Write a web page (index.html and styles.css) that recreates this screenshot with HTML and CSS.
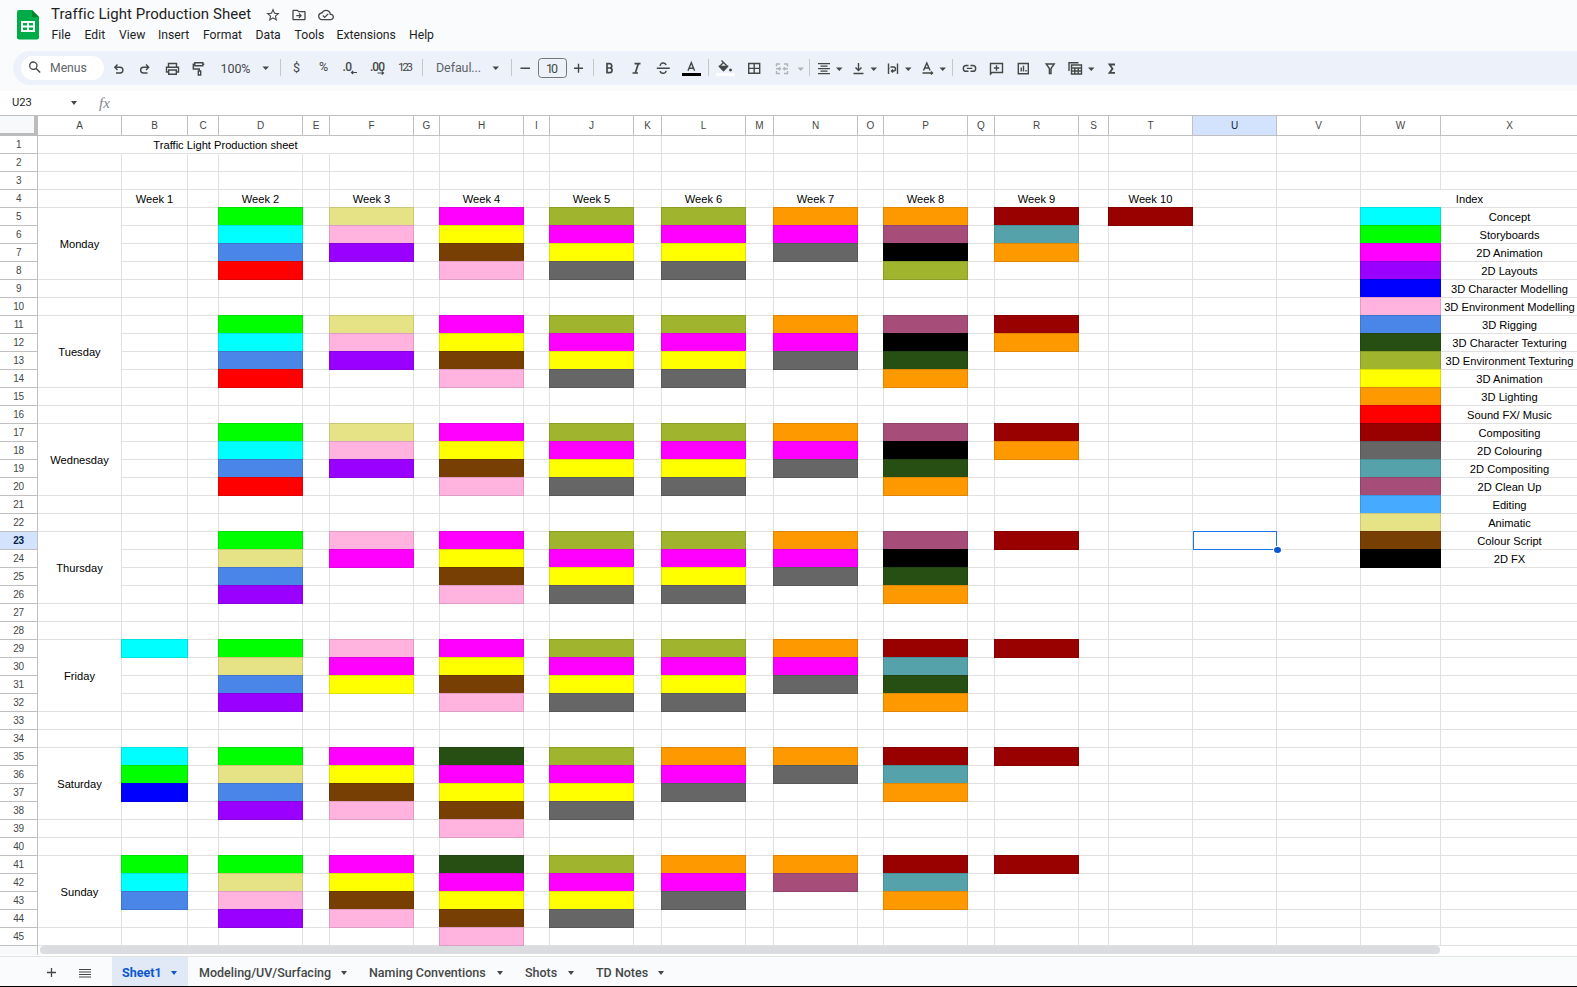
FILE: index.html
```html
<!DOCTYPE html>
<html lang="en">
<head>
<meta charset="utf-8">
<title>Traffic Light Production Sheet</title>
<link rel="stylesheet" href="styles.css">
</head>
<body>
<header class="top">
  <svg class="logo" width="22" height="30" viewBox="0 0 22 30"><path fill="#00ac47" d="M2 0h13l7 7v20.500a2 2 0 0 1-2 2H2a2 2 0 0 1-2-2V2a2 2 0 0 1 2-2z"/><path fill="#00832d" d="M15 0l7 7h-7z"/><path fill="#fff" fill-rule="evenodd" d="M4 11h14v11H4zM6 13v2.500h4V13zM12 13v2.500h4V13zM6 17.500V20h4v-2.500zM12 17.500V20h4v-2.500z"/></svg>
  <div class="heading">
    <div class="title-row">
      <span class="title">Traffic Light Production Sheet</span>
      <svg class="ic star" width="16" height="16" viewBox="0 0 24 24"><path d="M22 9.240l-7.190-.62L12 2 9.190 8.630 2 9.240l5.460 4.730L5.820 21 12 17.270 18.180 21l-1.630-7.030L22 9.240zM12 15.400l-3.760 2.270 1-4.280-3.320-2.880 4.380-.38L12 6.100l1.710 4.040 4.380.38-3.320 2.880 1 4.280L12 15.400z"/></svg>
      <svg class="ic folder" width="16" height="16" viewBox="0 0 24 24"><path d="M20 6h-8l-2-2H4c-1.100 0-2 .9-2 2v12c0 1.100.9 2 2 2h16c1.100 0 2-.9 2-2V8c0-1.100-.9-2-2-2zm0 12H4V6h5.200l2 2H20v10zm-7.500-1l4-4-4-4-1.300 1.300 1.700 1.700H8v2h4.900l-1.700 1.700z"/></svg>
      <svg class="ic cloud" width="16" height="16" viewBox="0 0 24 24"><path d="M19.350 10.040A7.490 7.490 0 0 0 12 4C9.110 4 6.600 5.640 5.350 8.040A5.994 5.994 0 0 0 0 14c0 3.310 2.690 6 6 6h13c2.760 0 5-2.240 5-5 0-2.640-2.050-4.780-4.650-4.960zM19 18H6c-2.210 0-4-1.790-4-4 0-2.050 1.530-3.760 3.560-3.970l1.070-.11.5-.95A5.469 5.469 0 0 1 12 6c2.620 0 4.880 1.860 5.390 4.430l.3 1.500 1.530.11A2.980 2.980 0 0 1 22 15c0 1.650-1.350 3-3 3zm-9-3.820l-2.090-2.090L6.500 13.500 10 17l6.010-6.010-1.410-1.410z"/></svg>
    </div>
    <nav class="menus">
      <span class="m1">File</span><span class="m2">Edit</span><span class="m3">View</span><span class="m4">Insert</span><span class="m5">Format</span><span class="m6">Data</span><span class="m7">Tools</span><span class="m8">Extensions</span><span class="m9">Help</span>
    </nav>
  </div>
</header>
<div class="toolbar">
  <div class="search">
    <svg class="ic" width="16" height="16" viewBox="0 0 24 24"><path d="M20.500 19l-5.700-5.700a6.500 6.500 0 1 0-1.500 1.500l5.700 5.700zM9.500 14a4.500 4.500 0 1 1 0-9 4.500 4.500 0 0 1 0 9z" transform="translate(0 -1)"/></svg>
    <span>Menus</span>
  </div>
  <svg class="tools" width="1020" height="34" viewBox="106 51 1020 34">
    <g class="fill">
      <g class="tx"><text x="220.500" y="73" textLength="30">100%</text><text x="293" y="71.500">$</text><text x="319" y="71" textLength="9.500">%</text><text x="342.500" y="70.500" class="b" textLength="9.500">.0</text><text x="370" y="70.500" class="b" textLength="15">.00</text><text x="398" y="71" class="sm" textLength="15">123</text><text x="436" y="71.500" textLength="45" class="lt">Defaul...</text><text x="546" y="72.500" textLength="12">10</text></g>
      <path d="M262.500 66.500h6.500l-3.250 3.500zM492.500 66.500h6.500l-3.250 3.500zM836 67.500h6.500l-3.250 3.500zM870.500 67.500h6.500l-3.250 3.500zM905 67.500h6.500l-3.250 3.500zM939.500 67.500h6.500l-3.250 3.500zM1088 67.500h6.500l-3.250 3.500z"/>
      <path class="off" d="M797.500 67.500h6.500l-3.250 3.500z"/>
    </g>
    <path class="sep" d="M280.500 59v17M422.500 59v17M511.500 59v17M593.500 59v17M708.500 59v17M809.500 59v17M952.500 59v17"/>
    <g class="line">
      <path d="M117.500 64.500l-2.700 2.700 2.700 2.700M115 67.200h5a2.800 2.800 0 0 1 0 5.800h-4"/>
      <path d="M146 64.500l2.700 2.700-2.700 2.700M148.500 67.200h-5a2.800 2.800 0 0 0 0 5.800h4"/>
      <path d="M168.500 67v-3.500h8V67M168.500 72h-2v-4.800h12V72h-2M168.700 70h7.600v4.300h-7.600z"/>
      <path d="M194.800 62.800h8v3h-8zM202.800 64.200h1.500M194.800 64.200h-1.500V69h6v2M198.300 71h2.400v4h-2.400z"/>
      <path class="arrow" d="M357 72.500h-5.500m1.700-1.700l-1.700 1.700 1.700 1.700M377.500 73h6m-1.700-1.700l1.700 1.700-1.700 1.700"/>
      <path d="M520.500 68.200h9.500M574 68.200h9M578.500 63.700v9"/>
      <rect x="538.500" y="58.500" width="28" height="19" rx="3" class="box"/>
      <path d="M607 63.700v9h2.500a2.300 2.300 0 0 0 .4-4.700 2.100 2.100 0 0 0-.6-4.300zM607 68h2.700" stroke-width="1.700"/>
      <path d="M634.500 63.700h6M632.500 73h5.500M638.300 63.700l-3 9.300" stroke-width="1.700"/>
      <path d="M656.800 68.300h13M660.300 66a2.800 2.400 0 0 1 5.800-1M660.200 71a2.900 2.400 0 0 0 5.800-.3"/>
      <path d="M688 70.700l3.300-8 3.300 8M689.200 68.200h4.200"/>
      <path d="M721.500 60.500l2.500 2.500 3.500 3.500-4 4-4-4 4-4"/>
      <path d="M719.800 66.500h7.400l-3.700 4z" fill="#444746"/>
      <circle cx="730.500" cy="70" r=".8"/>
      <path d="M748.700 63.500h11v9.800h-11zM754.200 63.500v9.800M748.700 68.400h11"/>
      <path class="offl" d="M780 64h-3.500v2.500M784 64h3.500v2.500M780 73.500h-3.500V71M784 73.500h3.500V71M776 68.700h4.500M788 68.700h-4.500M779 67.200l1.500 1.500-1.500 1.500M785 67.200l-1.500 1.500 1.500 1.500"/>
      <path d="M818 63.600h12M820.500 66.100h7M818 68.600h12M820.500 71.100h7M818 73.600h12"/>
      <path d="M853.500 73.500h10M858.500 63v7M855.500 67.500l3 3 3-3"/>
      <path d="M888.500 63.500v10.500M897.500 63.500v10.500M888.500 68.500h1M890.500 67h3a1.900 1.900 0 0 1 0 4h-2.500M893 69.500l-1.500 1.500 1.500 1.500"/>
      <path d="M923.500 70.500l3.300-7.500 3.300 7.500M924.800 68h4M922.500 73h10M931 71.500l1.500 1.500-1.500 1.500"/>
      <path d="M968.500 65.500h-2.300a2.900 2.900 0 0 0 0 5.800h2.300M970.500 65.500h2.300a2.900 2.900 0 0 1 0 5.800h-2.300M966.800 68.400h5.500"/>
      <path d="M990.500 74V63.500h12v9h-10.500zM996.500 65.300v5.400M993.800 68h5.400"/>
      <path d="M1018.300 63.500h10v10.300h-10zM1021.200 67.500v4M1023.500 65.800v5.700M1026 70v1.500"/>
      <path d="M1046.200 64h8l-3.200 4.500v5h-1.600v-5z"/>
      <path d="M1069 71V62.700h9.500M1071.500 65h10v9h-10zM1071.500 68h10M1074.800 68v6M1078.200 68v6M1071.500 71h10"/>
      <path d="M1115 64.500h-5.500l3 4.200-3 4.200h5.500" stroke-width="1.800"/>
    </g>
    <path d="M682 73h19v3h-19z"/><path fill="#fff" d="M716 73h19v3h-19z"/>
  </svg>
</div>
<div class="formula"><span class="ref">U23</span><i class="caret"></i><span class="fx">fx</span></div>
<main class="sheet" id="sheet"></main>
<div class="scroll"><div class="stub"></div><div class="thumb"></div></div>
<footer class="tabs">
  <svg class="add" width="12" height="12" viewBox="0 0 12 12"><path d="M5.500 1v9M1 5.500h9"/></svg>
  <svg class="all" width="12" height="12" viewBox="0 0 12 12"><path d="M0 2.500h12M0 5h12M0 7.500h12M0 10h12"/></svg>
  <div class="tab active"><span class="t1">Sheet1</span><i class="caret"></i></div>
  <div class="tab w2"><span>Modeling/UV/Surfacing</span><i class="caret"></i></div>
  <div class="tab w3"><span>Naming Conventions</span><i class="caret"></i></div>
  <div class="tab w4"><span>Shots</span><i class="caret"></i></div>
  <div class="tab w5"><span>TD Notes</span><i class="caret"></i></div>
</footer>
<script src="sheet.js"></script>
</body>
</html>
```
FILE: styles.css
```css
* { box-sizing: border-box; }
body { margin: 0; width: 1577px; height: 987px; overflow: hidden; background: #f9fbfd; font-family: "Liberation Sans", Arial, sans-serif; display: flex; flex-direction: column; border-bottom: 1px solid #000; }
.ic { fill: #444746; flex: none; }

.top { height: 51px; flex: none; display: flex; padding-left: 17px; }
.logo { margin-top: 10px; flex: none; }
.heading { padding: 4px 0 0 12px; }
.title-row { display: flex; align-items: center; height: 21px; }
.title { font: 15px/21px Roboto, sans-serif; letter-spacing: 0.05px; width: 214px; color: #1f1f1f; white-space: nowrap; }
.folder { margin-left: 10px; }
.cloud { margin-left: 11px; }
.menus { display: flex; padding-left: 0.5px; font: 12.200px/20px Roboto, sans-serif; color: #1f1f1f; white-space: nowrap; }
.m1 { width: 33px; } .m2 { width: 34.5px; } .m3 { width: 39px; } .m4 { width: 45px; } .m5 { width: 52.5px; }
.m6 { width: 39px; } .m7 { width: 42px; } .m8 { width: 72.500px; }

.toolbar { height: 34px; flex: none; margin-left: 13px; background: #edf2fa; border-radius: 17px 0 0 17px; display: flex; align-items: center; padding-left: 8px; }
.search { width: 83px; height: 24px; border-radius: 12px; background: #fff; display: flex; align-items: center; padding-left: 6px; gap: 7px; font: 12.200px/24px Roboto, sans-serif; color: #5f6368; }
.tools { margin-left: 2px; flex: none; }
.tools .fill { fill: #444746; }
.tools .off { fill: #b0b3b8; }
.tx { font: 12.500px Roboto, sans-serif; }
.tx .sm { font-size: 11.500px; }
.tx .b { font-size: 12px; font-weight: 500; }
.tx .lt { fill: #5f6368; }
.sep { stroke: #c7c7c7; }
.line { fill: none; stroke: #444746; stroke-width: 1.4; }
.line .arrow { stroke-width: 1.2; }
.line .box { stroke: #747775; stroke-width: 1; }
.line .offl { stroke: #b0b3b8; }

.caret { width: 0; height: 0; border: 3.500px solid transparent; border-top: 4px solid #444746; border-bottom: 0; flex: none; }
.formula { margin-top: 6px; height: 24px; flex: none; background: #fff; display: flex; align-items: center; padding-left: 12px; font: 11.200px Roboto, sans-serif; color: #1f1f1f; }
.ref { width: 59px; padding-bottom: 1px; }
.fx { margin-left: 22px; padding-top: 1px; font: italic 15px "Liberation Serif", serif; color: #80868b; }

.sheet { flex: none; height: 831px; overflow: hidden; background: #fff; border-top: 1px solid #c0c0c0; display: grid; grid-auto-rows: 18px; grid-template-rows: 20px;
  grid-template-columns: 38px 84px 66px 31px 84px 27px 84px 26px 84px 26px 84px 28px 84px 28px 84px 26px 84px 27px 84px 30px 84px 84px 84px 80px 138px; }
.corner { background: #f8f9fa; border-right: 4px solid #bcbcbc; border-bottom: 3px solid #bcbcbc; }
.head { border-right: 1px solid #c0c0c0; border-bottom: 1px solid #c0c0c0; display: flex; align-items: center; justify-content: center; font-size: 10px; color: #444746; }
.head.on { background: #d3e3fd; color: #041e49; }
.row { font-size: 10px; letter-spacing: -0.4px; }
.row.on { font-weight: 700; }
.cell { border-right: 1px solid #e1e1e1; border-bottom: 1px solid #e1e1e1; display: flex; align-items: center; justify-content: center; font-size: 11.150px; color: #000; white-space: nowrap; padding-top: 1px; }
.color { margin: -1px 0 0 -1px; border: 1px solid rgba(0, 0, 0, .12); background-clip: border-box; }
.selected { position: relative; margin-left: 0; border: 1px solid #1a73e8; margin-top: -1px; }
.selected::after { content: ""; position: absolute; right: -5px; bottom: -4px; width: 7px; height: 6px; border-radius: 50%; background: #0b57d0; border: 0; box-shadow: 0 0 0 1px #fff; }

.lime { background-color: #0f0; } .cyan { background-color: #0ff; } .blue { background-color: #4a86e8; } .red { background-color: #f00; }
.khaki { background-color: #e6e387; } .pink { background-color: #ffb3de; } .violet { background-color: #90f; } .magenta { background-color: #f0f; }
.yellow { background-color: #ff0; } .brown { background-color: #783f04; } .olive { background-color: #a0b42d; } .grey { background-color: #666; }
.orange { background-color: #f90; } .black { background-color: #000; } .plum { background-color: #a64d79; } .teal { background-color: #55a2aa; }
.maroon { background-color: #900; } .forest { background-color: #274e13; } .navy { background-color: #00f; } .sky { background-color: #46aaff; }

.scroll { height: 11px; flex: none; background: #fff; display: flex; border-bottom: 1px solid #e1e3e1; }
.stub { width: 38px; height: 9px; background: #f8f9fa; border-right: 1px solid #c0c0c0; }
.thumb { margin-left: 2px; width: 1400px; height: 8px; border-radius: 4px; background: #dadce0; }

.tabs { height: 29px; flex: none; display: flex; align-items: stretch; padding-left: 46px; background: #f9fbfd; font: 500 12.500px Roboto, sans-serif; color: #444746; }
.tabs svg { stroke: #444746; stroke-width: 1.3; margin-top: 10px; flex: none; }
.tabs .all { stroke-width: 1.2; }
.all { margin-left: 21px; margin-right: 21px; }
.tab { display: flex; align-items: center; justify-content: space-between; padding: 2px 11px 0 11px; white-space: nowrap; }
.active { width: 76px; background: #e1e9f7; color: #0b57d0; font-weight: 700; padding-left: 10px; }
.active .caret { border-top-color: #0b57d0; }
.w2 { width: 170px; } .w3 { width: 156px; } .w4 { width: 71px; } .w5 { width: 90px; }
```
FILE: sheet.js
```js
const columns = 'ABCDEFGHIJKLMNOPQRSTUVWX';
const palette = { g: 'lime', c: 'cyan', b: 'blue', r: 'red', k: 'khaki', p: 'pink', v: 'violet', m: 'magenta', y: 'yellow', n: 'brown', o: 'olive', e: 'grey', a: 'orange', x: 'black', u: 'plum', t: 'teal', d: 'maroon', f: 'forest', z: 'navy', s: 'sky' };
const days = [
  ['Monday', 5, { D: 'gcbr', F: 'kpv', H: 'mynp', J: 'omye', L: 'omye', N: 'ame', P: 'auxo', R: 'dta', T: 'd' }],
  ['Tuesday', 11, { D: 'gcbr', F: 'kpv', H: 'mynp', J: 'omye', L: 'omye', N: 'ame', P: 'uxfa', R: 'da' }],
  ['Wednesday', 17, { D: 'gcbr', F: 'kpv', H: 'mynp', J: 'omye', L: 'omye', N: 'ame', P: 'uxfa', R: 'da' }],
  ['Thursday', 23, { D: 'gkbv', F: 'pm', H: 'mynp', J: 'omye', L: 'omye', N: 'ame', P: 'uxfa', R: 'd' }],
  ['Friday', 29, { B: 'c', D: 'gkbv', F: 'pmy', H: 'mynp', J: 'omye', L: 'omye', N: 'ame', P: 'dtfa', R: 'd' }],
  ['Saturday', 35, { B: 'cgz', D: 'gkbv', F: 'mynp', H: 'fmynp', J: 'omye', L: 'ame', N: 'ae', P: 'dta', R: 'd' }],
  ['Sunday', 41, { B: 'gcb', D: 'gkpv', F: 'mynp', H: 'fmynp', J: 'omye', L: 'ame', N: 'au', P: 'dta', R: 'd' }]
];
const legend = ['Concept', 'Storyboards', '2D Animation', '2D Layouts', '3D Character Modelling', '3D Environment Modelling', '3D Rigging', '3D Character Texturing', '3D Environment Texturing', '3D Animation', '3D Lighting', 'Sound FX/ Music', 'Compositing', '2D Colouring', '2D Compositing', '2D Clean Up', 'Editing', 'Animatic', 'Colour Script', '2D FX'];

const text = { A1: 'Traffic Light Production sheet', W4: 'Index' };
const fills = {};
const spans = { A1: [6, 1], W4: [2, 1] };
'BDFHJLNPRT'.split('').forEach((c, i) => { text[c + 4] = 'Week ' + (i + 1); });
days.forEach(([name, start, cols]) => {
  text['A' + start] = name;
  spans['A' + start] = [1, 4];
  for (const c in cols) [...cols[c]].forEach((k, i) => { fills[c + (start + i)] = palette[k]; });
});
legend.forEach((label, i) => { text['X' + (5 + i)] = label; fills['W' + (5 + i)] = palette['cgmvzpbfoyardetusknx'[i]]; });

const sheet = document.getElementById('sheet');
function add(cls, row, col, label, span = [1, 1]) {
  const el = document.createElement('div');
  el.className = cls;
  el.style.gridArea = `${row} / ${col} / span ${span[1]} / span ${span[0]}`;
  if (label) el.textContent = label;
  sheet.append(el);
}
add('corner', 1, 1);
[...columns].forEach((c, i) => add('head' + (c === 'U' ? ' on' : ''), 1, i + 2, c));
const covered = new Set();
for (let r = 1; r <= 45; r++) {
  add('head row' + (r === 23 ? ' on' : ''), r + 1, 1, String(r));
  [...columns].forEach((c, i) => {
    const id = c + r;
    if (covered.has(id)) return;
    const span = spans[id] || [1, 1];
    for (let x = 0; x < span[0]; x++) for (let y = 0; y < span[1]; y++) covered.add(columns[i + x] + (r + y));
    const extra = fills[id] ? ' color ' + fills[id] : id === 'U23' ? ' selected' : '';
    add('cell' + extra, r + 1, i + 2, text[id], span);
  });
}
```
